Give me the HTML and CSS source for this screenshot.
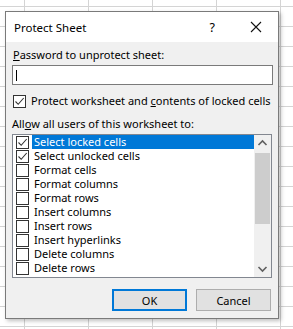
FILE: index.html
```html
<!DOCTYPE html>
<html lang="en">
 <head>
  <title>Protect Sheet</title>
  <link rel="stylesheet" href="styles.css">
 </head>
 <body>
  <div class="dialog">
   <div class="titlebar">
    <span class="title">Protect Sheet</span>
    <span class="help-btn">?</span>
    <svg class="close-btn" width="12" height="12" viewBox="0 0 12 12">
     <path d="M1 1 L11 11 M11 1 L1 11" stroke="#111" stroke-width="1.1" fill="none" />
    </svg>
   </div>
   <div class="content">
    <div class="label"><u>P</u>assword to unprotect sheet:</div>
    <div class="textbox"><span class="caret"></span></div>
    <div class="check-row">
     <span class="check checked">
      <svg width="11" height="11" viewBox="0 0 11 11"><path d="M1.5 5.5 L4.2 8.3 L9.7 2" stroke="#333" stroke-width="1.1" fill="none" /></svg>
     </span>
     <span>Protect worksheet and <u>c</u>ontents of locked cells</span>
    </div>
    <div class="label allow">All<u>o</u>w all users of this worksheet to:</div>
    <div class="listbox">
     <div class="items">
      <div class="item selected">
       <span class="check"><svg width="11" height="11" viewBox="0 0 11 11"><path d="M1.5 5.5 L4.2 8.3 L9.7 2" stroke="#333" stroke-width="1.1" fill="none" /></svg></span>
       <span class="item-text">Select locked cells</span>
      </div>
      <div class="item">
       <span class="check"><svg width="11" height="11" viewBox="0 0 11 11"><path d="M1.5 5.5 L4.2 8.3 L9.7 2" stroke="#333" stroke-width="1.1" fill="none" /></svg></span>
       <span class="item-text">Select unlocked cells</span>
      </div>
      <div class="item"><span class="check"></span><span class="item-text">Format cells</span></div>
      <div class="item"><span class="check"></span><span class="item-text">Format columns</span></div>
      <div class="item"><span class="check"></span><span class="item-text">Format rows</span></div>
      <div class="item"><span class="check"></span><span class="item-text">Insert columns</span></div>
      <div class="item"><span class="check"></span><span class="item-text">Insert rows</span></div>
      <div class="item"><span class="check"></span><span class="item-text">Insert hyperlinks</span></div>
      <div class="item"><span class="check"></span><span class="item-text">Delete columns</span></div>
      <div class="item"><span class="check"></span><span class="item-text">Delete rows</span></div>
     </div>
     <div class="scrollbar">
      <svg class="arrow" width="17" height="17" viewBox="0 0 17 17"><path d="M4.5 10 L8.5 6 L12.5 10" stroke="#606060" stroke-width="1.6" fill="none" /></svg>
      <div class="track"><div class="thumb"></div></div>
      <svg class="arrow" width="17" height="17" viewBox="0 0 17 17"><path d="M4.5 7 L8.5 11 L12.5 7" stroke="#606060" stroke-width="1.6" fill="none" /></svg>
     </div>
    </div>
    <div class="buttons">
     <button class="btn default">OK</button>
     <button class="btn">Cancel</button>
    </div>
   </div>
  </div>
 </body>
</html>
```

FILE: styles.css
```css
html, body {
    margin: 0;
    height: 100%;
}

body {
    background-color: #fff;
    background-image:
        linear-gradient(to right, #d4d4d4 1px, transparent 1px),
        linear-gradient(to bottom, #d4d4d4 1px, transparent 1px);
    background-size: 64px 20px;
    background-position: 24px 6px;
    font-family: "Noto Sans", sans-serif;
    font-size: 11px;
    color: #000;
    overflow: hidden;
    padding-top: 11px;
    box-sizing: border-box;
}

.dialog {
    margin-left: 5px;
    width: 274px;
    height: 308px;
    box-sizing: border-box;
    border: 1px solid #7a7a7a;
    background: #f0f0f0;
    box-shadow: 2px 2px 4px rgba(0, 0, 0, 0.25);
    display: flex;
    flex-direction: column;
}

.titlebar {
    height: 30px;
    background: #fff;
    display: flex;
    align-items: center;
    padding-left: 8px;
    padding-right: 16px;
    flex: 0 0 auto;
}

.title {
    flex: 1;
    font-size: 11.5px;
    margin-top: 1px;
}

.help-btn {
    font-size: 12.5px;
    margin-right: 35px;
}

.content {
    flex: 1;
    padding: 5px 5px 8px 6px;
    display: flex;
    flex-direction: column;
}

.label {
    line-height: 16px;
    height: 16px;
    padding-left: 1px;
    white-space: nowrap;
}

.textbox {
    margin-top: 2px;
    height: 20px;
    box-sizing: border-box;
    border: 1px solid #7a7a7a;
    background: #fff;
    display: flex;
    align-items: center;
    padding-left: 3px;
}

.caret {
    width: 1px;
    height: 11px;
    background: #000;
}

.check-row {
    margin-top: 8px;
    height: 16px;
    line-height: 16px;
    display: flex;
    align-items: center;
    white-space: nowrap;
    padding-left: 1px;
}

.check {
    width: 13px;
    height: 13px;
    box-sizing: border-box;
    border: 1px solid #333;
    background: #fff;
    display: flex;
    align-items: center;
    justify-content: center;
    flex: 0 0 13px;
}

.check-row .check {
    margin-right: 5px;
}

.allow {
    margin-top: 7px;
    padding-left: 0;
}

.listbox {
    margin-top: 2px;
    height: 144px;
    width: 260px;
    box-sizing: border-box;
    border: 1px solid #828790;
    background: #fff;
    display: flex;
}

.items {
    flex: 1;
}

.item {
    height: 14px;
    line-height: 14px;
    overflow: hidden;
    display: flex;
    align-items: center;
    padding-left: 3px;
    white-space: nowrap;
}

.item-text {
    flex: 1;
    height: 14px;
    line-height: 14px;
    margin-left: 3px;
    padding-left: 2px;
}

.item.selected .item-text {
    background: #0078d7;
    color: #fff;
}

.scrollbar {
    width: 17px;
    background: #f0f0f0;
    display: flex;
    flex-direction: column;
}

.arrow {
    flex: 0 0 17px;
}

.track {
    flex: 1;
    padding: 1px 1px 0 1px;
}

.thumb {
    height: 71px;
    background: #cdcdcd;
}

.buttons {
    margin-top: 11px;
    display: flex;
    justify-content: flex-end;
    gap: 9px;
    padding-right: 2px;
}

.btn {
    width: 75px;
    height: 22px;
    box-sizing: border-box;
    border: 1px solid #adadad;
    background: #e1e1e1;
    font-family: "Noto Sans", sans-serif;
    font-size: 11px;
    color: #000;
    padding: 0;
}

.btn.default {
    border: 2px solid #0078d7;
}
```
